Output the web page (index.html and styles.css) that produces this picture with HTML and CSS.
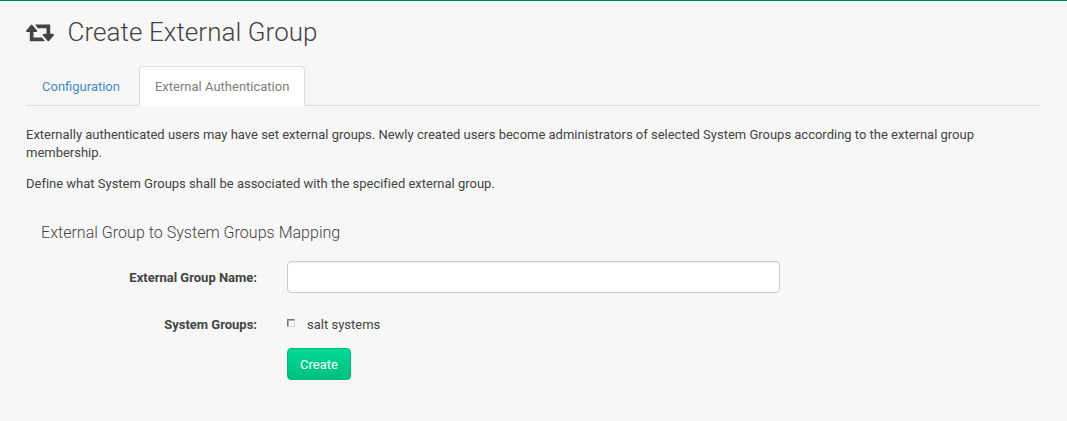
FILE: index.html
```html
<!DOCTYPE html>
<html lang="en">
<head>
<meta charset="utf-8">
<title>Create External Group</title>
<link rel="stylesheet" href="styles.css">
</head>
<body>
<main class="page">
  <h1 class="title">
    <svg class="title-icon" viewBox="0 0 1920 1792" aria-hidden="true"><path d="M1280 1504q0 13-9.5 22.5t-22.5 9.5h-960q-8 0-13.5-2t-9-7-5.5-8-3-11.5-1-11.5v-600h-192q-26 0-45-19t-19-45q0-24 15-41l320-384q19-22 49-22t49 22l320 384q15 17 15 41 0 26-19 45t-45 19h-192v384h576q16 0 25 11l160 192q7 10 7 21zm640-416q0 24-15 41l-320 384q-20 23-49 23t-49-23l-320-384q-15-17-15-41 0-26 19-45t45-19h192v-384h-576q-16 0-25-12l-160-192q-7-9-7-20 0-13 9.5-22.5t22.5-9.5h960q8 0 13.5 2t9 7 5.5 8 3 11.5 1 11.5v600h192q26 0 45 19t19 45z"/></svg>
    <span>Create External Group</span>
  </h1>
  <nav class="tabs">
    <a class="tab">Configuration</a>
    <a class="tab tab-active">External Authentication</a>
  </nav>
  <p class="text">Externally authenticated users may have set external groups. Newly created users become administrators of selected System Groups according to the external group membership.</p>
  <p class="text">Define what System Groups shall be associated with the specified external group.</p>
  <form class="form">
    <h2 class="subtitle">External Group to System Groups Mapping</h2>
    <div class="row">
      <label class="label" for="name">External Group Name:</label>
      <input class="input" id="name" type="text">
    </div>
    <div class="row row-groups">
      <span class="label">System Groups:</span>
      <label class="option"><input class="check" type="checkbox"><span>salt systems</span></label>
    </div>
    <button class="button" type="button">Create</button>
  </form>
</main>
</body>
</html>
```
FILE: styles.css
```css
* { box-sizing: border-box; }
body {
  margin: 0;
  background: #f7f7f7;
  color: #434343;
  font: 13px/18px Roboto, sans-serif;
}
.page {
  min-height: 421px;
  padding: 17px 26px 0;
  border-top: 1px solid #00885c;
}
.title {
  display: flex;
  align-items: center;
  gap: 13.6px;
  height: 28px;
  margin: 0 0 20px;
  font-size: 26px;
  font-weight: 300;
  line-height: 28px;
  letter-spacing: .05px;
}
.title-icon { width: 28px; height: 26px; fill: #434343; }
.tabs {
  display: flex;
  gap: 3px;
  height: 40px;
  border-bottom: 1px solid #ddd;
}
.tab {
  height: 40px;
  padding: 11px 15px;
  border: 1px solid transparent;
  border-radius: 4px 4px 0 0;
  color: #428bca;
}
.tab-active {
  background: #fff;
  border-color: #ddd #ddd #fff;
  color: #808080;
}
.text { margin: 0 0 13px; letter-spacing: -.006px; }
.tabs + .text { margin-top: 20px; }
.form { padding: 17px 15px 0; }
.subtitle {
  margin: 0 0 18px;
  font-size: 16px;
  font-weight: 300;
  line-height: 20px;
  letter-spacing: .03px;
}
.row { display: flex; align-items: center; gap: 30px; height: 32px; }
.row-groups { margin: 16px 0 7px; }
.label { width: 216px; font-weight: 700; text-align: right; }
.row:not(.row-groups) .label { padding-top: 2px; }
.input {
  width: 493px;
  height: 32px;
  border: 1px solid #ccc;
  border-radius: 4px;
  background: #fff;
  box-shadow: inset 0 1px 1px rgba(0, 0, 0, .075);
}
.option { display: flex; align-items: center; gap: 12px; }
.check {
  appearance: none;
  width: 8px;
  height: 8px;
  margin: 0 0 4px;
  border: 1px solid;
  border-color: #777 #d9d5ce #d9d5ce #777;
  background: #fff;
  box-shadow: inset 1px 1px #aaa;
}
.button {
  display: block;
  width: 64px;
  height: 32px;
  margin: 0 0 0 246px;
  padding: 2px 0 0;
  border: 1px solid #00b87c;
  border-radius: 4px;
  background: linear-gradient(#00d993, #00c081);
  color: #fff;
  font: inherit;
}
```
